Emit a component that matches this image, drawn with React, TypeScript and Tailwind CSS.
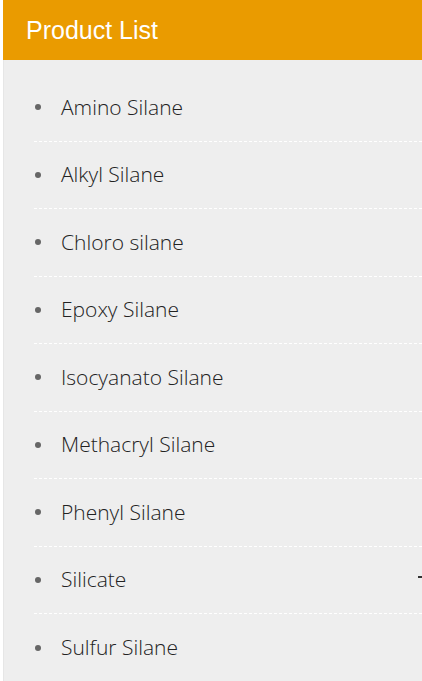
import React from "react";

const items = [
  "Amino Silane",
  "Alkyl Silane",
  "Chloro silane",
  "Epoxy Silane",
  "Isocyanato Silane",
  "Methacryl Silane",
  "Phenyl Silane",
  "Silicate",
  "Sulfur Silane",
];

export default function App() {
  return (
    <div className="w-[422px] h-[681px] bg-white pl-[3px] overflow-hidden relative">
      <div className="h-full flex flex-col">
        <div className="h-[60px] bg-[#ea9b00] flex items-center pl-[23px] shrink-0">
          <span className="text-white text-[25px] [font-family:'Liberation_Sans',Arial,sans-serif] leading-none">
            Product List
          </span>
        </div>
        <div className="flex-1 bg-[#eeeeee] pt-[14px] pl-[30px] border-l border-[#e6e6e6]">
          <ul className="flex flex-col">
            {items.map((it, i) => (
              <li
                key={it}
                className={`h-[67.5px] flex items-center ${i < items.length - 1 ? "border-b border-dashed border-white" : ""}`}
              >
                <span className="w-[6px] h-[6px] rounded-full bg-[#666666] ml-[1px] mr-[20px] shrink-0" />
                <span className="text-[21px] font-light text-[#222222] [font-family:'Open_Sans',sans-serif]">
                  {it}
                </span>
              </li>
            ))}
          </ul>
        </div>
      </div>
      <span className="absolute left-[418px] top-[576px] w-[4px] h-[2px] bg-[#333333]" />
    </div>
  );
}
